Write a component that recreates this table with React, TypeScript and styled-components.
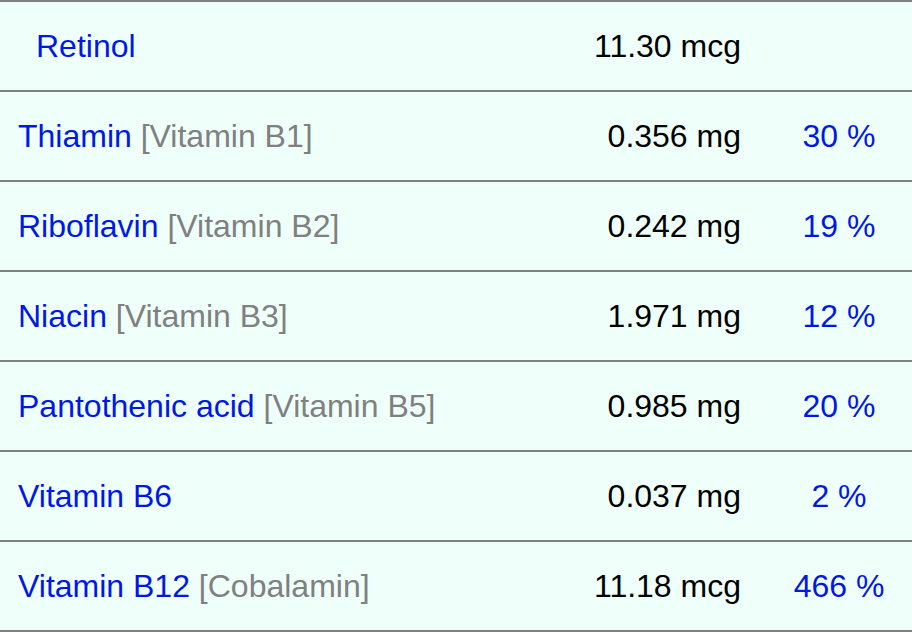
import React from "react"
import styled, { createGlobalStyle } from "styled-components"

const GlobalStyle = createGlobalStyle`
  html, body {
    margin: 0;
    padding: 0;
    background: #effffa;
  }
  body {
    font-family: "Liberation Sans", Arial, Helvetica, sans-serif;
  }
`

interface Nutrient {
  name: string
  alias?: string
  amount: string
  percent?: string
  sub?: boolean
}

const nutrients: Nutrient[] = [
  { name: "Retinol", amount: "11.30 mcg", sub: true },
  { name: "Thiamin", alias: "Vitamin B1", amount: "0.356 mg", percent: "30 %" },
  { name: "Riboflavin", alias: "Vitamin B2", amount: "0.242 mg", percent: "19 %" },
  { name: "Niacin", alias: "Vitamin B3", amount: "1.971 mg", percent: "12 %" },
  { name: "Pantothenic acid", alias: "Vitamin B5", amount: "0.985 mg", percent: "20 %" },
  { name: "Vitamin B6", amount: "0.037 mg", percent: "2 %" },
  { name: "Vitamin B12", alias: "Cobalamin", amount: "11.18 mcg", percent: "466 %" },
]

const Table = styled.div`
  width: 912px;
  background: #effffa;
  border-bottom: 2px solid #808080;
  font-size: 32px;
`

const Row = styled.div`
  display: grid;
  grid-template-columns: 1fr 200px 146px;
  align-items: center;
  height: 88px;
  border-top: 2px solid #808080;
`

const NameCell = styled.div<{ $sub?: boolean }>`
  padding-left: ${(p) => (p.$sub ? "36px" : "18px")};
  white-space: nowrap;
`

const Name = styled.span`
  color: #0018e6;
`

const Alias = styled.span`
  color: #808080;
`

const Amount = styled.div`
  color: #000;
  text-align: right;
  padding-right: 25px;
  white-space: nowrap;
`

const Percent = styled.div`
  color: #0018e6;
  text-align: center;
  white-space: nowrap;
`

export default function App() {
  return (
    <>
      <GlobalStyle />
      <Table>
        {nutrients.map((n) => (
          <Row key={n.name}>
            <NameCell $sub={n.sub}>
              <Name>{n.name}</Name>
              {n.alias && <Alias> [{n.alias}]</Alias>}
            </NameCell>
            <Amount>{n.amount}</Amount>
            <Percent>{n.percent}</Percent>
          </Row>
        ))}
      </Table>
    </>
  )
}
